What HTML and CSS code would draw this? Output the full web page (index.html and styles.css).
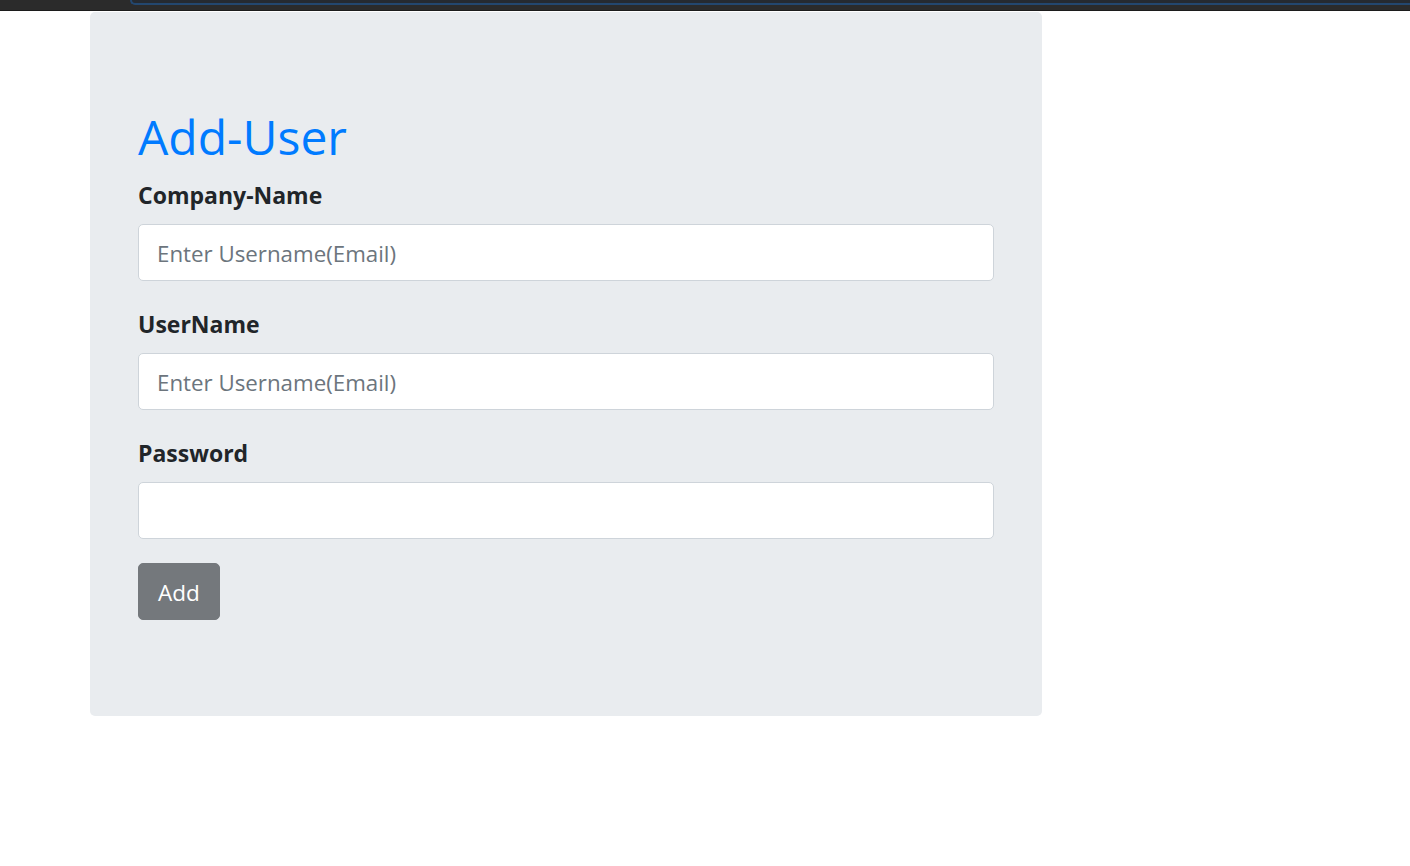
FILE: index.html
```html
<!DOCTYPE html>
<html lang="en">
<head>
<meta charset="utf-8">
<title>Add-User</title>
<link rel="stylesheet" href="styles.css">
</head>
<body>
<div class="topbar"><div class="tab"></div></div>
<div class="jumbotron">
  <h1 class="title">Add-User</h1>
  <form class="form">
    <div class="form-group">
      <label class="label">Company-Name</label>
      <input class="form-control" type="text" placeholder="Enter Username(Email)">
    </div>
    <div class="form-group">
      <label class="label">UserName</label>
      <input class="form-control" type="text" placeholder="Enter Username(Email)">
    </div>
    <div class="form-group last">
      <label class="label">Password</label>
      <input class="form-control" type="password">
    </div>
    <button class="btn" type="button">Add</button>
  </form>
</div>
</body>
</html>
```
FILE: styles.css
```css
html, body {
  margin: 0;
  padding: 0;
  background: #ffffff;
  font-family: "Open Sans", "Noto Sans", sans-serif;
  color: #212529;
}

.topbar {
  height: 10px;
  background: #2b2b2b;
  border-bottom: 1px solid #1c1c1c;
  overflow: hidden;
}

.tab {
  margin-left: 130px;
  height: 3px;
  border-left: 2px solid #23476f;
  border-bottom: 2px solid #23476f;
  border-bottom-left-radius: 8px;
  background: #252a31;
}

.jumbotron {
  box-sizing: border-box;
  width: 952px;
  margin: 1px 0 0 90px;
  padding: 96px 48px;
  background: #e9ecef;
  border-radius: 5px;
}

.title {
  margin: 0 0 15px;
  font-size: 48px;
  font-weight: 400;
  line-height: 1.2;
  color: #007bff;
}

.form {
  display: flex;
  flex-direction: column;
}

.form-group {
  display: flex;
  flex-direction: column;
  margin-bottom: 29px;
}

.form-group.last {
  margin-bottom: 24px;
}

.label {
  font-size: 23px;
  font-weight: 700;
  line-height: 28px;
  margin-bottom: 15px;
  color: #212529;
}

.form-control {
  box-sizing: border-box;
  height: 57px;
  width: 100%;
  padding: 2px 18px 0;
  font-family: inherit;
  font-size: 22.3px;
  color: #495057;
  background: #ffffff;
  border: 1px solid #ced4da;
  border-radius: 5px;
  outline: none;
}

.form-control::placeholder {
  color: #6c757d;
}

.btn {
  align-self: flex-start;
  box-sizing: border-box;
  width: 82px;
  height: 57px;
  padding: 2px 0 0;
  font-family: inherit;
  font-size: 22.5px;
  color: #ffffff;
  background: #74787c;
  border: 1px solid #74787c;
  border-radius: 5px;
}
```
